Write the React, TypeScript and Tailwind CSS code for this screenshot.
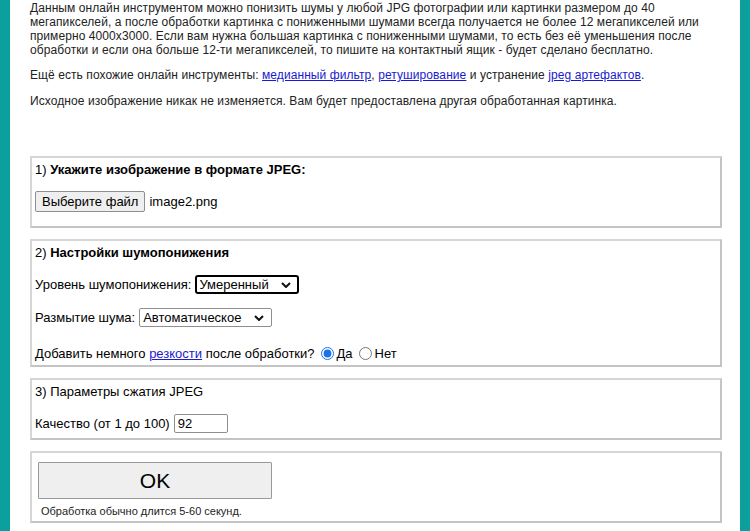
import type { ReactNode } from 'react';

const font = { fontFamily: '"Liberation Sans", Arial, sans-serif' };

function Chevron() {
  return (
    <svg width="10" height="6" viewBox="0 0 10 6" className="ml-auto shrink-0">
      <path d="M1 1l4 4 4-4" fill="none" stroke="#111" strokeWidth="2" />
    </svg>
  );
}

function Box({ className, children }: { className?: string; children: ReactNode }) {
  return (
    <div className={`border-2 border-[#c4c4c4] border-t-[#d6d6d6] border-l-[#d6d6d6] px-[3px] ${className ?? ''}`}>
      {children}
    </div>
  );
}

export default function App() {
  return (
    <div className="flex h-[531px] w-[750px] overflow-hidden bg-white" style={font}>
      <div className="w-[10px] shrink-0 bg-[#0b9f9e]" />
      <div className="flex-1 pl-5 pr-[18px] text-[12px] leading-[14px] tracking-[0.08px] text-[#222]">
        <p className="mt-[1px]">
          Данным онлайн инструментом можно понизить шумы у любой JPG фотографии или картинки размером до 40
          мегапикселей, а после обработки картинка с пониженными шумами всегда получается не более 12 мегапикселей или
          примерно 4000x3000. Если вам нужна большая картинка с пониженными шумами, то есть без её уменьшения после
          обработки и если она больше 12-ти мегапикселей, то пишите на контактный ящик - будет сделано бесплатно.
        </p>
        <p className="mt-[11px]">
          Ещё есть похожие онлайн инструменты:{' '}
          <a href="#" className="text-[#1a1ad0] underline">медианный фильтр</a>,{' '}
          <a href="#" className="text-[#1a1ad0] underline">ретуширование</a> и устранение{' '}
          <a href="#" className="text-[#1a1ad0] underline">jpeg артефактов</a>.
        </p>
        <p className="mt-[12px]">
          Исходное изображение никак не изменяется. Вам будет предоставлена другая обработанная картинка.
        </p>

        <div className="mt-[48px] flex flex-col gap-[11px] text-[13px] leading-[15px] tracking-normal text-black">
          <Box className="h-[72px] pt-[4px]">
            <div>
              1) <b>Укажите изображение в формате JPEG:</b>
            </div>
            <div className="mt-[14px] flex items-center gap-[4px]">
              <button className="h-[21px] rounded-[2px] border border-[#8f8f8f] bg-[#efefef] px-[6px]">
                Выберите файл
              </button>
              <span>image2.png</span>
            </div>
          </Box>

          <Box className="h-[128px] pt-[4px]">
            <div>
              2) <b>Настройки шумопонижения</b>
            </div>
            <div className="mt-[15px] flex items-center gap-[4px]">
              <span>Уровень шумопонижения:</span>
              <div className="flex h-[19px] w-[104px] items-center rounded-[3px] border-2 border-black pl-[2px] pr-[6px]">
                Умеренный
                <Chevron />
              </div>
            </div>
            <div className="mt-[14px] flex items-center gap-[4px]">
              <span>Размытие шума:</span>
              <div className="flex h-[19px] w-[133px] items-center rounded-[2px] border border-[#8f8f8f] pl-[3px] pr-[7px]">
                Автоматическое
                <Chevron />
              </div>
            </div>
            <div className="mt-[19px] flex items-center">
              <span>
                Добавить немного <a href="#" className="text-[#1a1ad0] underline">резкости</a> после обработки?
              </span>
              <input type="radio" name="sharp" defaultChecked className="ml-[6px] mr-[3px] h-[13px] w-[13px] accent-[#1a73e8]" />
              <span>Да</span>
              <input type="radio" name="sharp" className="ml-[6px] mr-[3px] h-[13px] w-[13px]" />
              <span>Нет</span>
            </div>
          </Box>

          <Box className="h-[62px] pt-[4px]">
            <div>3) Параметры сжатия JPEG</div>
            <div className="mt-[15px] flex items-center gap-[4px]">
              <span>Качество (от 1 до 100)</span>
              <div className="flex h-[19px] w-[54px] items-center rounded-[2px] border border-[#8f8f8f] px-[3px]">92</div>
            </div>
          </Box>

          <Box className="h-[72px] pt-[9px]">
            <button className="ml-[3px] h-[37px] w-[234px] rounded-[1px] border border-[#9a9a9a] bg-[#efefef] text-[21px]">
              OK
            </button>
            <div className="ml-[6px] mt-[6px] text-[11px] leading-[13px] text-[#222]">Обработка обычно длится 5-60 секунд.</div>
          </Box>
        </div>
      </div>
      <div className="w-[10px] shrink-0 bg-[#0b9f9e]" />
    </div>
  );
}
